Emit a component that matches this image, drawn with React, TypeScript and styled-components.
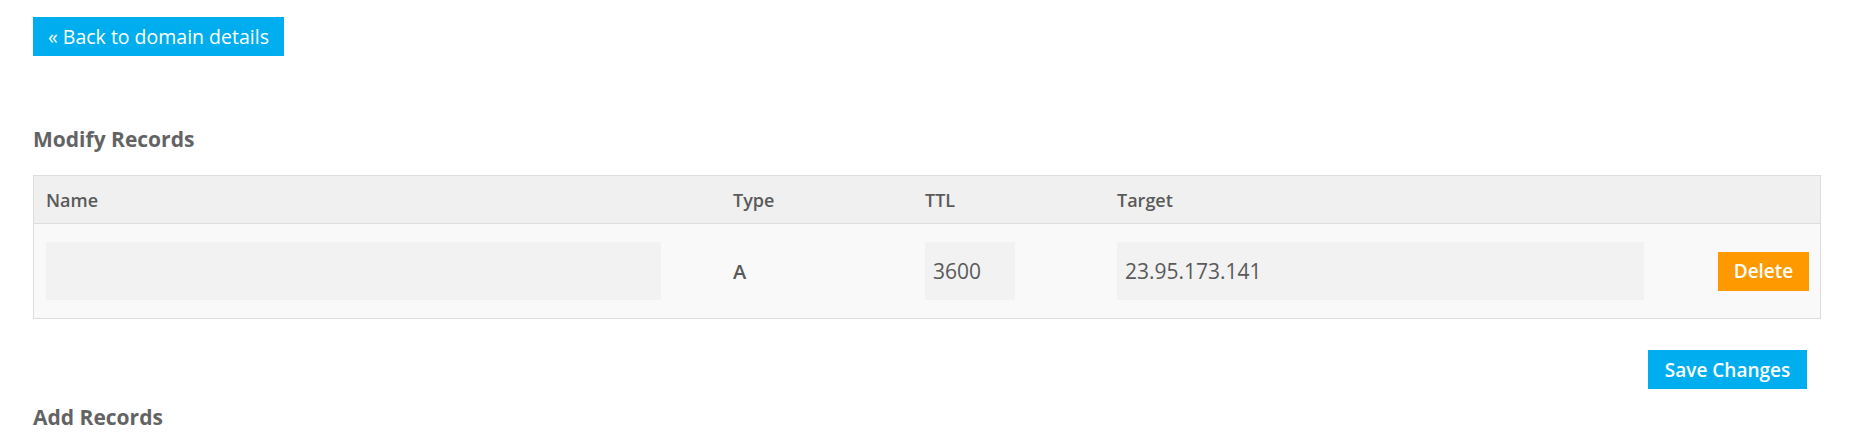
import React from 'react';
import styled, { createGlobalStyle } from 'styled-components';

//
// MAIN COMPONENT
//
const records = [
  { id: 1, name: '', type: 'A', ttl: '3600', target: '23.95.173.141' },
];

const App = () => {
  return (
    <>
      <GlobalStyle />
      <Page>
        <BackButton>&laquo; Back to domain details</BackButton>

        <Heading>Modify Records</Heading>
        <RecordsTable>
          <HeaderRow>
            <HeadCell>Name</HeadCell>
            <HeadCell>Type</HeadCell>
            <HeadCell>TTL</HeadCell>
            <HeadCell>Target</HeadCell>
            <HeadCell />
          </HeaderRow>
          {
            records.map((record) => (
              <BodyRow key={record.id}>
                <Cell>
                  <TextInput $width="615px" defaultValue={record.name} />
                </Cell>
                <Cell>
                  <TypeValue>{record.type}</TypeValue>
                </Cell>
                <Cell>
                  <TextInput $width="90px" defaultValue={record.ttl} />
                </Cell>
                <Cell>
                  <TextInput $width="527px" defaultValue={record.target} />
                </Cell>
                <ActionCell>
                  <ActionButton $color="#ff9900" $width="91px">Delete</ActionButton>
                </ActionCell>
              </BodyRow>
            ))
          }
        </RecordsTable>

        <SaveBar>
          <ActionButton $color="#00aeef" $width="159px">Save Changes</ActionButton>
        </SaveBar>

        <Heading $tight>Add Records</Heading>
      </Page>
    </>
  );
};

export default App;

//
// STYLED COMPONENT
//
const GlobalStyle = createGlobalStyle`
  html, body {
    margin: 0;
    padding: 0;
    background: #ffffff;
    font-family: "Open Sans", "Liberation Sans", sans-serif;
  }
  * {
    box-sizing: border-box;
  }
`;

const Page = styled.div`
  display: flex;
  flex-direction: column;
  align-items: flex-start;
  padding: 17px 42px 0 33px;
`;

const BackButton = styled.button`
  display: inline-flex;
  align-items: center;
  justify-content: center;
  width: 251px;
  height: 39px;
  border: 0;
  padding: 0;
  background: #00aeef;
  color: #ffffff;
  font-family: inherit;
  font-size: 19.5px;
  cursor: pointer;
`;

const Heading = styled.h3<{ $tight?: boolean }>`
  margin: ${(p) => (p.$tight ? '14px 0 0' : '69px 0 0')};
  font-size: 21px;
  line-height: 28px;
  font-weight: 700;
  color: #636363;
`;

const RecordsTable = styled.div`
  width: 100%;
  margin-top: 22px;
  border: 1px solid #dddddd;
`;

const Row = styled.div`
  display: grid;
  grid-template-columns: 687px 192px 192px 1fr auto;
  align-items: center;
`;

const HeaderRow = styled(Row)`
  height: 48px;
  background: #f0f0f0;
  border-bottom: 1px solid #dddddd;
`;

const BodyRow = styled(Row)`
  height: 94px;
  background: #f9f9f9;
`;

const HeadCell = styled.div`
  padding: 0 12px;
  font-size: 18px;
  font-weight: 600;
  color: #5a5a5a;
`;

const Cell = styled.div`
  padding: 0 12px;
`;

const ActionCell = styled.div`
  padding: 0 11px 0 12px;
  display: flex;
  justify-content: flex-end;
`;

const TextInput = styled.input<{ $width: string }>`
  display: block;
  width: ${(p) => p.$width};
  height: 58px;
  border: 0;
  outline: none;
  padding: 0 8px;
  background: #f2f2f2;
  color: #5a5a5a;
  font-family: inherit;
  font-size: 21px;
`;

const TypeValue = styled.span`
  font-size: 20px;
  font-weight: 600;
  color: #5a5a5a;
`;

const ActionButton = styled.button<{ $color: string; $width: string }>`
  display: inline-flex;
  align-items: center;
  justify-content: center;
  width: ${(p) => p.$width};
  height: 39px;
  border: 0;
  padding: 0;
  background: ${(p) => p.$color};
  color: #ffffff;
  font-family: inherit;
  font-size: 19px;
  font-weight: 600;
  cursor: pointer;
`;

const SaveBar = styled.div`
  width: 100%;
  display: flex;
  justify-content: flex-end;
  padding-right: 14px;
  margin-top: 31px;
`;
